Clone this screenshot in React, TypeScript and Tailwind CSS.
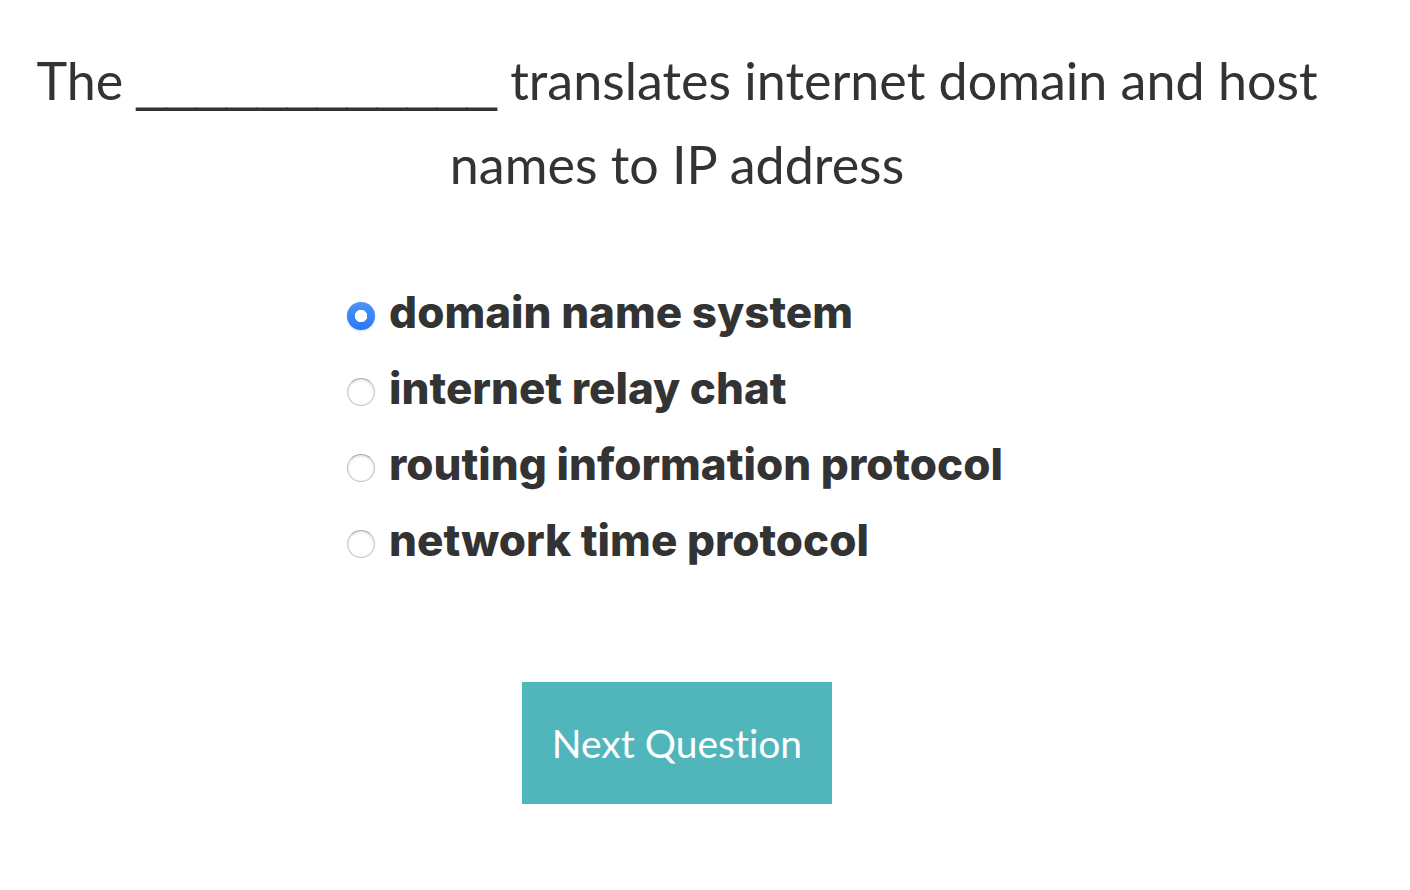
import { useState } from "react";

const options = [
  "domain name system",
  "internet relay chat",
  "routing information protocol",
  "network time protocol",
];

export default function App() {
  const [selected, setSelected] = useState(options[0]);

  return (
    <main className="min-h-screen bg-white pt-[38px] pr-14 text-[#333333] font-['Lato','Liberation_Sans',sans-serif] [font-variant-ligatures:none]">
      <form className="flex flex-col items-center" onSubmit={(e) => e.preventDefault()}>
        <h1 id="question" className="text-center text-[52px] leading-[84px] font-normal">
          The <span className="font-['Liberation_Sans',sans-serif] text-[54px] leading-none">____________</span> translates internet domain and host
          <br />
          names to IP address
        </h1>
        <div role="radiogroup" aria-labelledby="question" className="mt-[68px] flex flex-col pr-1">
          {options.map((option) => (
            <label key={option} className="flex h-[76px] items-center gap-[14px] font-['Inter',sans-serif] text-[44px] font-extrabold whitespace-nowrap">
              <input
                type="radio"
                name="answer"
                value={option}
                checked={selected === option}
                onChange={() => setSelected(option)}
                className="mt-2 size-7 shrink-0 appearance-none rounded-full border border-[#c4c4c4] border-t-[#a8a8a8] bg-white shadow-[inset_0_1px_3px_#00000026] checked:border-0 checked:bg-[radial-gradient(circle,white_6px,transparent_6.5px),linear-gradient(#4a94f8,#2d76f6)] checked:shadow-[0_1px_2px_#3881f54d]"
              />
              {option}
            </label>
          ))}
        </div>
        <button type="submit" className="mt-[104px] h-[122px] bg-[#51b6bb] px-[30px] text-[39px] text-white">
          Next Question
        </button>
      </form>
    </main>
  );
}
